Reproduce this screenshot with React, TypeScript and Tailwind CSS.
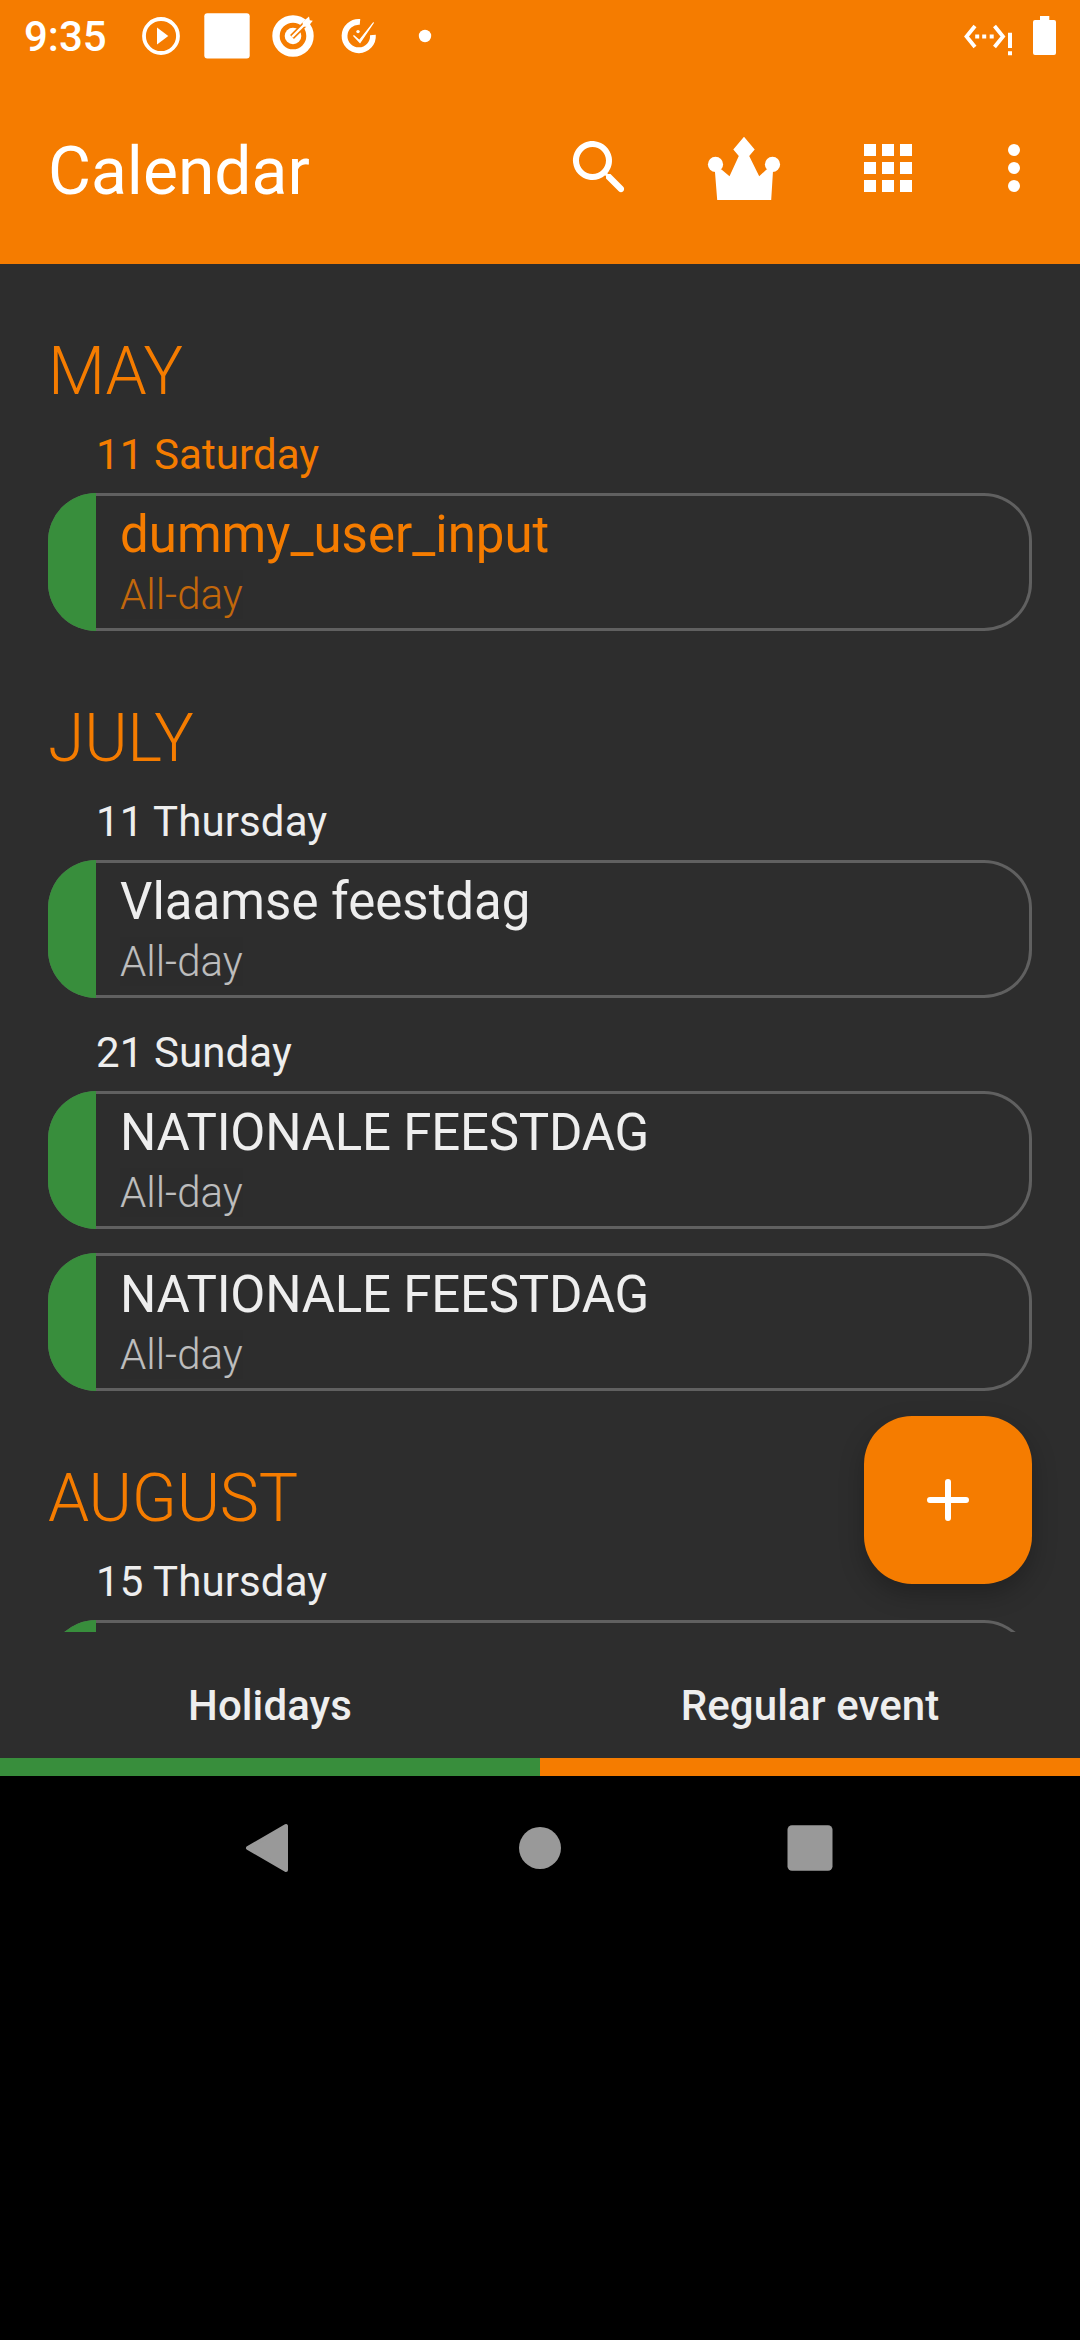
import React from "react";

type EventItem = { title?: string };
type Day = { label: string; highlighted?: boolean; events: EventItem[] };
type Month = { name: string; days: Day[] };

const months: Month[] = [
  { name: "MAY", days: [{ label: "11 Saturday", highlighted: true, events: [{ title: "dummy_user_input" }] }] },
  {
    name: "JULY",
    days: [
      { label: "11 Thursday", events: [{ title: "Vlaamse feestdag" }] },
      { label: "21 Sunday", events: [{ title: "NATIONALE FEESTDAG" }, { title: "NATIONALE FEESTDAG" }] },
    ],
  },
  { name: "AUGUST", days: [{ label: "15 Thursday", events: [{}] }] },
];

function StatusBar() {
  return (
    <div className="flex h-[72px] items-center justify-between pl-[24px]">
      <div className="flex items-center">
        <span className="w-[116px] pt-[2px] text-[42px] leading-[50px] font-medium">9:35</span>
        <svg width="300" height="72" viewBox="140 0 300 72" fill="#fff">
          <circle cx="161" cy="36" r="17" fill="none" stroke="#fff" strokeWidth="3.8" />
          <path d="M157 27.6v17l11.3-8.5z" />
          <rect x="204.300" y="13.200" width="45.400" height="45.400" rx="3" />
          <circle cx="293" cy="36" r="17" fill="none" stroke="#fff" strokeWidth="7.400" />
          <circle cx="293" cy="36" r="8.300" />
          <path d="M292 37L307 22" stroke="#f57c00" strokeWidth="5.500" />
          <path d="M292 37L308 21" stroke="#fff" strokeWidth="2.400" />
          <path d="M303 26.500l-.5-4.500 6.500-5.500 .8 3.700 3 .6-5 6.100z" />
          <path d="M360 21.900A14.200 14.200 0 1 0 372.900 35" fill="none" stroke="#fff" strokeWidth="5.800" />
          <circle cx="358" cy="31.600" r="1.700" />
          <path d="M353.500 35.500l5.800 5L373.600 22.500 360 42.500z" stroke="#fff" strokeWidth="1.200" />
          <circle cx="425" cy="36" r="6.200" />
        </svg>
      </div>
      <svg width="120" height="72" viewBox="960 0 120 72" fill="#fff">
        <g fill="none" stroke="#fff" strokeWidth="3.800">
          <path d="M975 26L966.500 36.500L975 47" />
          <path d="M994.500 26L1003 36.500L994.500 47" />
        </g>
        <path d="M975.200 34.500h4v4h-4zM982.200 34.500h4v4h-4zM989.700 34.500h4v4h-4zM1008 32.700h4V48h-4zM1008 51.200h4v4h-4z" />
        <path d="M1040 16h9.300v4h4.700a2 2 0 0 1 2 2v31a2 2 0 0 1-2 2h-19a2 2 0 0 1-2-2v-31a2 2 0 0 1 2-2h5z" />
      </svg>
    </div>
  );
}

function Toolbar() {
  return (
    <div className="flex h-[192px] items-start justify-between pt-[60px] pl-[48px]">
      <h1 className="pt-px text-[66px] leading-[78px] font-normal">Calendar</h1>
      <div className="flex items-center text-white">
        <svg className="mr-[60px]" width="72" height="72" viewBox="0 0 24 24" fill="currentColor">
          <path d="M15.500 14h-.79l-.28-.27c1.200-1.400 1.820-3.310 1.480-5.340-.47-2.780-2.790-5-5.590-5.340-4.230-.52-7.790 3.040-7.270 7.270.34 2.800 2.560 5.120 5.340 5.590 2.030.34 3.940-.28 5.340-1.480l.27.28v.79l4.250 4.250c.41.41 1.080.41 1.490 0 .41-.41.41-1.080 0-1.490L15.500 14zm-6 0C7.010 14 5 11.990 5 9.500S7.010 5 9.500 5 14 7.010 14 9.500 11.990 14 9.500 14z" />
        </svg>
        <svg className="mr-[60px]" width="96" height="72" viewBox="696 132 96 72" fill="currentColor">
          <path d="M744 136.700L754.700 149.500L749.200 156L759.200 176.300L766.500 169.500L773 171L771.200 200H717.200L714.900 171L721.500 169.500L729.500 176.300L738.800 156L733.300 149.500Z" />
          <circle cx="715.500" cy="164.400" r="7.600" />
          <circle cx="772.500" cy="164.400" r="7.600" />
        </svg>
        <svg className="mr-[54px]" width="72" height="72" viewBox="0 0 24 24" fill="currentColor">
          <path d="M4 8h4V4H4v4zm6 12h4v-4h-4v4zm-6 0h4v-4H4v4zm0-6h4v-4H4v4zm6 0h4v-4h-4v4zm6-10v4h4V4h-4zm-6 4h4V4h-4v4zm6 6h4v-4h-4v4zm0 6h4v-4h-4v4z" />
        </svg>
        <svg className="mr-[30px]" width="72" height="72" viewBox="0 0 24 24" fill="currentColor">
          <circle cx="12" cy="6" r="2" />
          <circle cx="12" cy="12" r="2" />
          <circle cx="12" cy="18" r="2" />
        </svg>
      </div>
    </div>
  );
}

function EventCard({ title, highlighted }: { title?: string; highlighted?: boolean }) {
  const tight = title === title?.toUpperCase();
  return (
    <div className="flex h-[138px] overflow-hidden rounded-[48px] bg-[#606060]">
      <div className="w-[48px] shrink-0 bg-[#388e3c]" />
      <div
        className={`my-[3px] mr-[3px] flex grow flex-col rounded-r-[45px] bg-[#2d2d2d] pt-[9px] pl-[24px] ${
          highlighted ? "text-[#f57c00]" : "text-[#eeeeee]"
        }`}
      >
        {title && (
          <>
            <div className={tight ? "text-[51px] leading-[60px] tracking-[-0.22px]" : "text-[51px] leading-[60px]"}>
              {title}
            </div>
            <div className="mt-[5px] text-[42px] leading-[50px] font-light opacity-75">All-day</div>
          </>
        )}
      </div>
    </div>
  );
}

function MonthSection({ month }: { month: Month }) {
  return (
    <section className="pt-[69px]">
      <h2 className="h-[78px] text-[66px] leading-[78px] font-light tracking-[-0.2px] text-[#f57c00]">{month.name}</h2>
      {month.days.map((day, i) => (
        <div key={day.label} className={i === 0 ? "pt-[19px]" : "pt-[30px]"}>
          <h3
            className={`mb-[14px] h-[49px] pl-[48px] text-[42px] leading-[49px] tracking-[0.1px] ${
              day.highlighted ? "text-[#f57c00]" : "text-[#eeeeee]"
            }`}
          >
            {day.label}
          </h3>
          <div className="flex flex-col gap-[24px]">
            {day.events.map((e, j) => (
              <EventCard key={j} title={e.title} highlighted={day.highlighted} />
            ))}
          </div>
        </div>
      ))}
    </section>
  );
}

function NavigationBar() {
  return (
    <nav className="flex h-[144px] items-center justify-center bg-black">
      <svg width="600" height="60" viewBox="240 1818 600 60" fill="#999">
        <path d="M248 1848L286 1826V1870Z" stroke="#999" strokeWidth="4" strokeLinejoin="round" />
        <circle cx="540" cy="1848" r="21" />
        <rect x="787.500" y="1825.300" width="45" height="45.400" rx="4.500" />
      </svg>
    </nav>
  );
}

export default function App() {
  return (
    <div className="flex h-[2340px] w-[1080px] flex-col overflow-hidden bg-black font-['Roboto',sans-serif]">
      <header className="h-[264px] shrink-0 bg-[#f57c00] text-white">
        <StatusBar />
        <Toolbar />
      </header>
      <main className="relative h-[1368px] shrink-0 bg-[#2d2d2d]">
        <div className="h-full overflow-hidden px-[48px]">
          {months.map((m) => (
            <MonthSection key={m.name} month={m} />
          ))}
        </div>
        <button className="absolute right-[48px] bottom-[48px] flex size-[168px] items-center justify-center rounded-[48px] bg-[#f57c00] shadow-[0_10px_24px_rgba(0,0,0,0.25)]">
          <svg width="72" height="72" viewBox="0 0 24 24" fill="none" stroke="#fff" strokeWidth="2" strokeLinecap="round">
            <path d="M12 6v12M6 12h12" />
          </svg>
        </button>
      </main>
      <footer className="grid h-[144px] shrink-0 grid-cols-2 bg-[#2d2d2d] text-center text-[42px] leading-[50px] font-medium tracking-[0.1px] text-[#eeeeee]">
        <div className="border-b-[18px] border-[#388e3c] pt-[49px]">Holidays</div>
        <div className="border-b-[18px] border-[#f57c00] pt-[49px]">Regular event</div>
      </footer>
      <NavigationBar />
    </div>
  );
}
